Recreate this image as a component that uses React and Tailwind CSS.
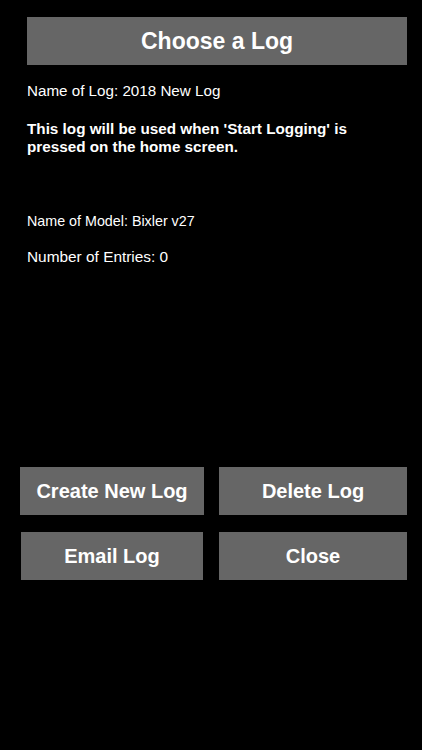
const font = { fontFamily: '"Liberation Sans", Arial, sans-serif' };

const Button = ({ label, className }) => (
  <button
    type="button"
    className={`h-12 bg-[#666666] text-white font-bold text-[20px] leading-none flex items-center justify-center ${className}`}
  >
    {label}
  </button>
);

const App = () => {
  return (
    <div className="min-h-screen w-[422px] h-[750px] bg-black text-white overflow-hidden" style={font}>
      <div className="pt-[17px] pl-[27px] pr-[15px]">
        <div className="h-12 bg-[#666666] flex items-center justify-center">
          <h1 className="text-[23px] font-bold leading-none">Choose a Log</h1>
        </div>

        <p className="mt-[17px] text-[15.2px] leading-[18px]">Name of Log: 2018 New Log</p>

        <p className="mt-[20px] text-[15.25px] leading-[17.5px] font-bold">
          This log will be used when 'Start Logging' is
          <br />
          pressed on the home screen.
        </p>

        <p className="mt-[57px] text-[14.3px] leading-[18px]">Name of Model: Bixler v27</p>

        <p className="mt-[18px] text-[15.4px] leading-[18px]">Number of Entries: 0</p>
      </div>

      <div className="mt-[201px] flex flex-col gap-[17px]">
        <div className="flex pl-[20px] gap-[15px]">
          <Button label="Create New Log" className="w-[184px]" />
          <Button label="Delete Log" className="w-[188px]" />
        </div>
        <div className="flex pl-[21px] gap-[16px]">
          <Button label="Email Log" className="w-[182px]" />
          <Button label="Close" className="w-[188px]" />
        </div>
      </div>
    </div>
  );
};

export default App;
